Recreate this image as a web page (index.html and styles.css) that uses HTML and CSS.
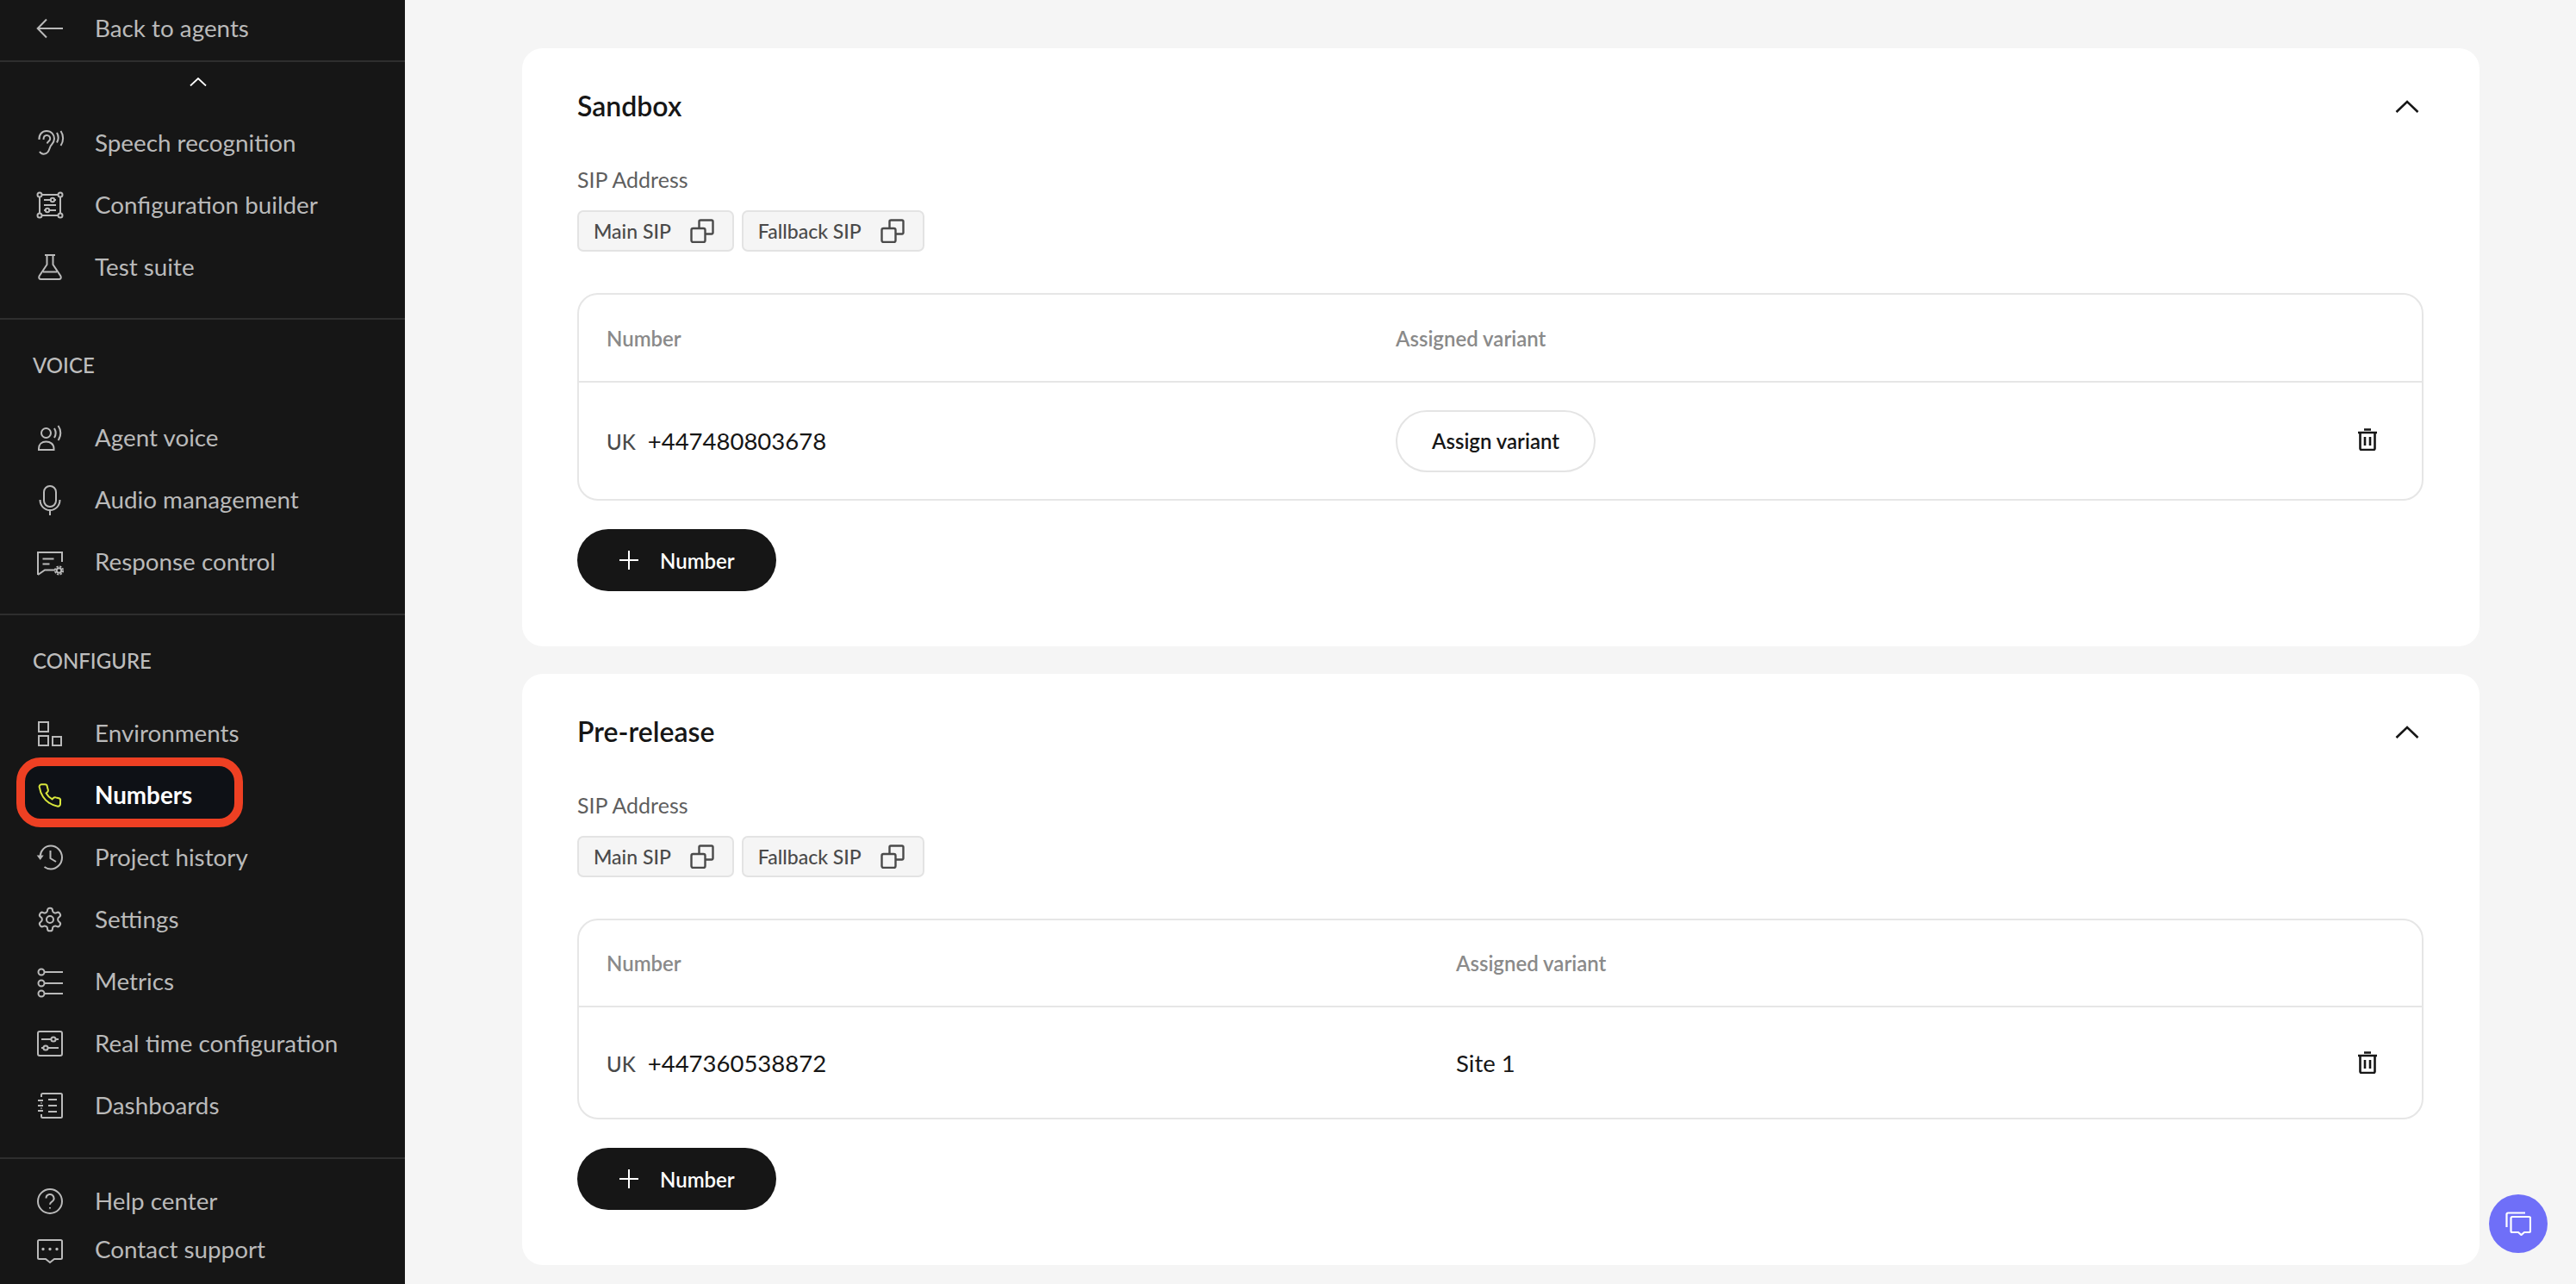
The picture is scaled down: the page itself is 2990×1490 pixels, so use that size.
FILE: index.html
```html
<!DOCTYPE html>
<html lang="en">
<head>
<meta charset="utf-8">
<title>Numbers</title>
<link rel="stylesheet" href="styles.css">
</head>
<body>
<aside class="sidebar">
  <a class="back">
    <svg class="icon" viewBox="0 0 32 32"><path d="M31 16H2M12 5.500 1.700 16 12 26.500"/></svg>
    <span>Back to agents</span>
  </a>
  <div class="scroll-up"><svg viewBox="0 0 20 10"><path d="M1 9.500 10 1l9 8.500"/></svg></div>
  <section class="group group-first">
    <a class="item"><svg class="icon" viewBox="0 0 32 32"><path d="M3.500 12C3 6 7 2 12 2c5.500 0 9 4 9 9 0 4-2.500 6-4 8-1.500 2.200-1.500 5-3.500 7.500-2.500 3-7.500 3-9.500-.5"/><path d="M8.500 12c0-3 1.500-5 3.700-5 2.500 0 4 2 4 4 0 2.800-3 3-3.500 5.500"/><path d="M24 4c2 3.500 2 8 0 11.500M28.500 2c3.500 5 3.500 12 0 17"/></svg><span>Speech recognition</span></a>
    <a class="item"><svg class="icon" viewBox="0 0 32 32"><path d="M6.500 4h19M6.500 28h19M4 6.500v19M28 6.500v19"/><circle cx="4" cy="4" r="2.500"/><circle cx="28" cy="4" r="2.500"/><circle cx="4" cy="28" r="2.500"/><circle cx="28" cy="28" r="2.500"/><path d="M9 10h14M9 16h14M9 22h14"/><circle class="knob" cx="19" cy="10" r="2.200"/><circle class="knob" cx="13" cy="22" r="2.200"/></svg><span>Configuration builder</span></a>
    <a class="item"><svg class="icon" viewBox="0 0 32 32"><path d="M10 2h12M12.500 2v11L3.500 26.500C2.700 28.500 3.500 30 5.500 30h21c2 0 2.800-1.500 2-3.500L19.500 13V2M8 21.500h16"/></svg><span>Test suite</span></a>
  </section>
  <section class="group">
    <h2 class="heading">VOICE</h2>
    <a class="item"><svg class="icon" viewBox="0 0 32 32"><circle cx="11.500" cy="10.500" r="5.500"/><path d="M3 30h17.500v-1.500c0-5-4-8-9-8s-8.500 3-8.500 8z"/><path d="M21 5c2 3.300 2 7.700 0 11M25.500 2c3.700 5 3.700 12 0 17"/></svg><span>Agent voice</span></a>
    <a class="item"><svg class="icon" viewBox="0 0 32 32"><rect x="9" y="0" width="14" height="24" rx="7"/><path d="M4.500 16c0 7 5 12 11.500 12s11.500-5 11.500-12M16 28v6"/></svg><span>Audio management</span></a>
    <a class="item"><svg class="icon" viewBox="0 0 32 32"><path d="M22 25.500h-3M2 31V5h28v11M2 31l8-5.500h9M7.500 12.500h13M7.500 18.500h8"/><circle class="gear-hub" cx="26.500" cy="26" r="2.800"/><circle class="gear-teeth" cx="26.500" cy="26" r="4.700"/></svg><span>Response control</span></a>
  </section>
  <section class="group">
    <h2 class="heading">CONFIGURE</h2>
    <a class="item"><svg class="icon" viewBox="0 0 32 32"><rect x="3" y="3" width="11" height="11"/><rect x="3" y="19" width="11" height="11"/><rect x="19" y="20" width="10" height="10"/></svg><span>Environments</span></a>
    <a class="item active"><svg class="icon" viewBox="0 0 24 24"><path class="thin" d="M21 16.900v2.600a2 2 0 0 1-2.180 2 17 17 0 0 1-7.400-2.900 16.800 16.800 0 0 1-5.500-5.500 17 17 0 0 1-2.900-7.500A2 2 0 0 1 5 2.500h2.600a2 2 0 0 1 2 1.700c.1.900.4 1.800.7 2.700a2 2 0 0 1-.45 2.100L8.700 10.100a14 14 0 0 0 5.200 5.200l1.100-1.100a2 2 0 0 1 2.100-.45c.9.300 1.800.6 2.700.7A2 2 0 0 1 21 16.900z"/></svg><span>Numbers</span></a>
    <a class="item"><svg class="icon" viewBox="0 0 32 32"><path d="M4.500 15C5 8 10 2.500 17 2.500c7 0 13 6 13 13.500s-6 13.500-13 13.500c-3 0-5.500-1-7.500-2.500"/><path class="solid" d="M.7 13.500h8L4.700 19z"/><path d="M16.500 8v9l6.500 4"/></svg><span>Project history</span></a>
    <a class="item"><svg class="icon" viewBox="0 0 24 24"><path class="thin" d="M12.220 2h-.44a2 2 0 0 0-2 2v.18a2 2 0 0 1-1 1.730l-.43.25a2 2 0 0 1-2 0l-.15-.08a2 2 0 0 0-2.730.73l-.22.38a2 2 0 0 0 .73 2.730l.15.1a2 2 0 0 1 1 1.720v.51a2 2 0 0 1-1 1.740l-.15.09a2 2 0 0 0-.73 2.730l.22.38a2 2 0 0 0 2.730.73l.15-.08a2 2 0 0 1 2 0l.43.25a2 2 0 0 1 1 1.730V20a2 2 0 0 0 2 2h.44a2 2 0 0 0 2-2v-.18a2 2 0 0 1 1-1.730l.43-.25a2 2 0 0 1 2 0l.15.08a2 2 0 0 0 2.730-.73l.22-.39a2 2 0 0 0-.73-2.730l-.15-.08a2 2 0 0 1-1-1.740v-.5a2 2 0 0 1 1-1.740l.15-.09a2 2 0 0 0 .73-2.730l-.22-.38a2 2 0 0 0-2.730-.73l-.15.08a2 2 0 0 1-2 0l-.43-.25a2 2 0 0 1-1-1.730V4a2 2 0 0 0-2-2z"/><circle class="thin" cx="12" cy="12" r="3"/></svg><span>Settings</span></a>
    <a class="item"><svg class="icon" viewBox="0 0 32 32"><circle cx="6" cy="5" r="3.500"/><circle cx="6" cy="18" r="3.500"/><circle cx="6" cy="30" r="3.500"/><path d="M10 5h21M10 18h21M10 30h21"/></svg><span>Metrics</span></a>
    <a class="item"><svg class="icon" viewBox="0 0 32 32"><rect x="2" y="2" width="28" height="28" rx="2"/><path d="M6 11h20M6 21h20"/><circle class="knob" cx="20" cy="11" r="2.600"/><circle class="knob" cx="11" cy="21" r="2.600"/></svg><span>Real time configuration</span></a>
    <a class="item"><svg class="icon" viewBox="0 0 32 32"><path d="M6 6V3.500A1.500 1.500 0 0 1 7.500 2h21A1.500 1.500 0 0 1 30 3.500v25a1.500 1.500 0 0 1-1.500 1.500h-21A1.500 1.500 0 0 1 6 28.500V26M2 10h6M2 16h6M2 22h6M6 12.500v1M6 18.500v1M14 9h10M14 16h10M14 23h10"/></svg><span>Dashboards</span></a>
  </section>
  <section class="group group-last">
    <a class="item item-short"><svg class="icon" viewBox="0 0 32 32"><circle cx="16" cy="16" r="14"/><path d="M11.500 12.500a4.500 4.500 0 1 1 6.800 3.800c-1.500.9-2.300 1.700-2.300 3.400"/><path d="M16 23v1.500"/></svg><span>Help center</span></a>
    <a class="item item-short"><svg class="icon" viewBox="0 0 32 32"><path d="M3.500 5h25A1.500 1.500 0 0 1 30 6.500v19a1.500 1.500 0 0 1-1.500 1.500H21l-5 4-5-4H3.500A1.500 1.500 0 0 1 2 25.500v-19A1.500 1.500 0 0 1 3.500 5z"/><path d="M8 15.500h.01M16 15.500h.01M24 15.500h.01" class="dots"/></svg><span>Contact support</span></a>
  </section>
  <div class="highlight"></div>
</aside>

<main class="content">
  <section class="card">
    <header class="card-head">
      <h1 class="card-title">Sandbox</h1>
      <svg class="chev" viewBox="0 0 28 16"><path d="M1.500 14 14 2l12.500 12"/></svg>
    </header>
    <p class="sip-label">SIP Address</p>
    <div class="chips">
      <button class="chip">Main SIP<svg class="copy" viewBox="0 0 28 28"><rect x="1.500" y="11" width="16" height="16" rx="2"/><path d="M10.500 11V3a1.500 1.500 0 0 1 1.500-1.500h13A1.500 1.500 0 0 1 26.500 3v13a1.500 1.500 0 0 1-1.500 1.500h-7.500"/></svg></button>
      <button class="chip">Fallback SIP<svg class="copy" viewBox="0 0 28 28"><rect x="1.500" y="11" width="16" height="16" rx="2"/><path d="M10.500 11V3a1.500 1.500 0 0 1 1.500-1.500h13A1.500 1.500 0 0 1 26.500 3v13a1.500 1.500 0 0 1-1.500 1.500h-7.500"/></svg></button>
    </div>
    <div class="table">
      <div class="row row-head head-tall sandbox-cols">
        <span>Number</span>
        <span>Assigned variant</span>
      </div>
      <div class="row row-body body-tall sandbox-cols">
        <span class="phone"><span class="cc">UK</span>+447480803678</span>
        <span><button class="assign">Assign variant</button></span>
        <svg class="trash" viewBox="0 0 22 26"><path d="M7 1.500h8M0 5h22M2.500 5v18.500A1.500 1.500 0 0 0 4 25h14a1.500 1.500 0 0 0 1.500-1.500V5M8 10v10M14 10v10"/></svg>
      </div>
    </div>
    <button class="add"><svg viewBox="0 0 24 24"><path d="M12 1v22M1 12h22"/></svg>Number</button>
  </section>

  <section class="card">
    <header class="card-head">
      <h1 class="card-title">Pre-release</h1>
      <svg class="chev" viewBox="0 0 28 16"><path d="M1.500 14 14 2l12.500 12"/></svg>
    </header>
    <p class="sip-label">SIP Address</p>
    <div class="chips">
      <button class="chip">Main SIP<svg class="copy" viewBox="0 0 28 28"><rect x="1.500" y="11" width="16" height="16" rx="2"/><path d="M10.500 11V3a1.500 1.500 0 0 1 1.500-1.500h13A1.500 1.500 0 0 1 26.500 3v13a1.500 1.500 0 0 1-1.500 1.500h-7.500"/></svg></button>
      <button class="chip">Fallback SIP<svg class="copy" viewBox="0 0 28 28"><rect x="1.500" y="11" width="16" height="16" rx="2"/><path d="M10.500 11V3a1.500 1.500 0 0 1 1.500-1.500h13A1.500 1.500 0 0 1 26.500 3v13a1.500 1.500 0 0 1-1.500 1.500h-7.500"/></svg></button>
    </div>
    <div class="table">
      <div class="row row-head prerelease-cols">
        <span>Number</span>
        <span>Assigned variant</span>
      </div>
      <div class="row row-body prerelease-cols">
        <span class="phone"><span class="cc">UK</span>+447360538872</span>
        <span class="variant">Site 1</span>
        <svg class="trash" viewBox="0 0 22 26"><path d="M7 1.500h8M0 5h22M2.500 5v18.500A1.500 1.500 0 0 0 4 25h14a1.500 1.500 0 0 0 1.500-1.500V5M8 10v10M14 10v10"/></svg>
      </div>
    </div>
    <button class="add"><svg viewBox="0 0 24 24"><path d="M12 1v22M1 12h22"/></svg>Number</button>
  </section>
</main>

<button class="chat-fab"><svg viewBox="0 0 30 28"><path d="M1.500 18V3A1.500 1.500 0 0 1 3 1.500h20"/><path d="M8 6h19.500A1.500 1.500 0 0 1 29 7.500v15a1.500 1.500 0 0 1-1.500 1.500H22l-3.500 3-3.500-3H8a1.500 1.500 0 0 1-1.500-1.500v-15A1.500 1.500 0 0 1 8 6z"/></svg></button>
</body>
</html>
```

FILE: styles.css
```css
* { box-sizing: border-box; }
html, body { height: 100%; }
body {
  margin: 0;
  display: flex;
  height: 1490px;
  overflow: hidden;
  background: #f5f5f5;
  font-family: "Lato", "Liberation Sans", sans-serif;
  color: #161616;
}
button { font-family: inherit; cursor: pointer; }

/* Sidebar */
.sidebar {
  position: relative;
  flex: 0 0 470px;
  width: 470px;
  height: 1490px;
  background: #161616;
  color: #bababa;
  font-size: 27.8px;
  overflow: hidden;
}
.back, .item {
  display: flex;
  align-items: center;
  padding-left: 42px;
}
.back { height: 72px; border-bottom: 2px solid #2e2e2e; padding-bottom: 4px; }
.back span, .item span { margin-left: 36px; line-height: 36px; }
.scroll-up {
  display: flex;
  justify-content: center;
  align-items: center;
  height: 58px;
  padding: 0 10px 12px 0;
}
.scroll-up svg { width: 20px; height: 10px; fill: none; stroke: #fff; stroke-width: 1.800; }
.icon {
  flex: 0 0 32px;
  width: 32px;
  height: 32px;
  overflow: visible;
  fill: none;
  stroke: currentColor;
  stroke-width: 2;
}
.icon .thin { stroke-width: 1.500; }
.icon .knob { fill: #161616; }
.icon .gear-hub { stroke-width: 2; }
.icon .gear-teeth { stroke-width: 1.800; stroke-dasharray: 2.300 1.400; }
.icon .solid { fill: currentColor; stroke: none; }
.icon .dots { stroke-width: 3.400; stroke-linecap: round; }
.item { height: 72px; }
.item-short { height: 56px; }
.group { border-bottom: 2px solid #2e2e2e; padding-bottom: 24px; }
.group-first { padding-bottom: 23px; }
.group-last { border-bottom: 0; padding-top: 21px; }
.heading {
  margin: 0 0 33px;
  padding: 38px 0 0 38px;
  font-size: 24px;
  font-weight: 500;
  line-height: 30px;
  color: #bdbdbd;
}
.active { position: relative; z-index: 1; color: #fff; font-weight: 700; }
.active .icon { color: #d8e63c; }
.highlight {
  position: absolute;
  left: 19px;
  top: 879px;
  width: 263px;
  height: 81px;
  background: #0e1116;
  border: 10px solid #ee4023;
  border-radius: 28px;
}

/* Main */
.content {
  flex: 1;
  padding: 56px 112px 0 136px;
  display: flex;
  flex-direction: column;
  gap: 32px;
  min-width: 0;
}
.card {
  flex: none;
  background: #fff;
  border-radius: 24px;
  padding: 47px 65px 64px 64px;
}
.card-head { display: flex; justify-content: space-between; align-items: center; height: 40px; }
.card-title { margin: 0; font-size: 32px; font-weight: 600; line-height: 40px; color: #161616; }
.chev { width: 28px; height: 16px; margin: 2px 5px 0 0; fill: none; stroke: #161616; stroke-width: 2.600; }
.sip-label { margin: 50px 0 21px; font-size: 25px; line-height: 30px; color: #5e5e5e; }
.chips { display: flex; gap: 9px; }
.chip {
  display: flex;
  align-items: center;
  height: 48px;
  padding: 0 21px 0 17px;
  gap: 22px;
  background: #f5f5f5;
  border: 2px solid #e3e3e3;
  border-radius: 7px;
  font-size: 23px;
  font-weight: 500;
  color: #4a4a4a;
}
.copy { width: 28px; height: 28px; fill: none; stroke: #4a4a4a; stroke-width: 2.400; }
.table {
  margin-top: 48px;
  border: 2px solid #e6e6e6;
  border-radius: 24px;
}
.row { display: grid; align-items: center; padding: 0 52px 0 32px; }
.sandbox-cols { grid-template-columns: 916px 1fr 22px; }
.prerelease-cols { grid-template-columns: 986px 1fr 22px; }
.row-head {
  height: 101px;
  border-bottom: 2px solid #e6e6e6;
  font-size: 24px;
  font-weight: 600;
  color: #8a8a8a;
}
.head-tall { height: 102px; }
.row-body { height: 128px; font-size: 27.5px; color: #161616; }
.body-tall { height: 135px; }
.phone { display: flex; align-items: baseline; }
.cc { font-size: 24px; font-weight: 500; color: #4a4a4a; margin-right: 14px; }
.assign {
  height: 72px;
  width: 232px;
  border: 2px solid #e4e4e4;
  border-radius: 36px;
  background: #fff;
  font-size: 24px;
  font-weight: 600;
  color: #161616;
}
.trash { width: 22px; height: 26px; fill: none; stroke: #161616; stroke-width: 2.600; }
.body-tall .trash { margin-top: -4px; }
.add {
  display: flex;
  align-items: center;
  margin-top: 33px;
  width: 231px;
  height: 72px;
  padding: 0 0 0 48px;
  gap: 24px;
  background: #161616;
  border: 0;
  border-radius: 36px;
  color: #fff;
  font-size: 24px;
  font-weight: 600;
}
.add svg { width: 24px; height: 24px; fill: none; stroke: #fff; stroke-width: 2; }

/* Floating chat */
.chat-fab {
  position: absolute;
  left: 2889px;
  top: 1386px;
  width: 68px;
  height: 68px;
  padding: 0;
  border: 0;
  border-radius: 50%;
  background: #6f6ff8;
  display: flex;
  align-items: center;
  justify-content: center;
}
.chat-fab svg { width: 30px; height: 28px; fill: none; stroke: #fff; stroke-width: 2.200; }
```
